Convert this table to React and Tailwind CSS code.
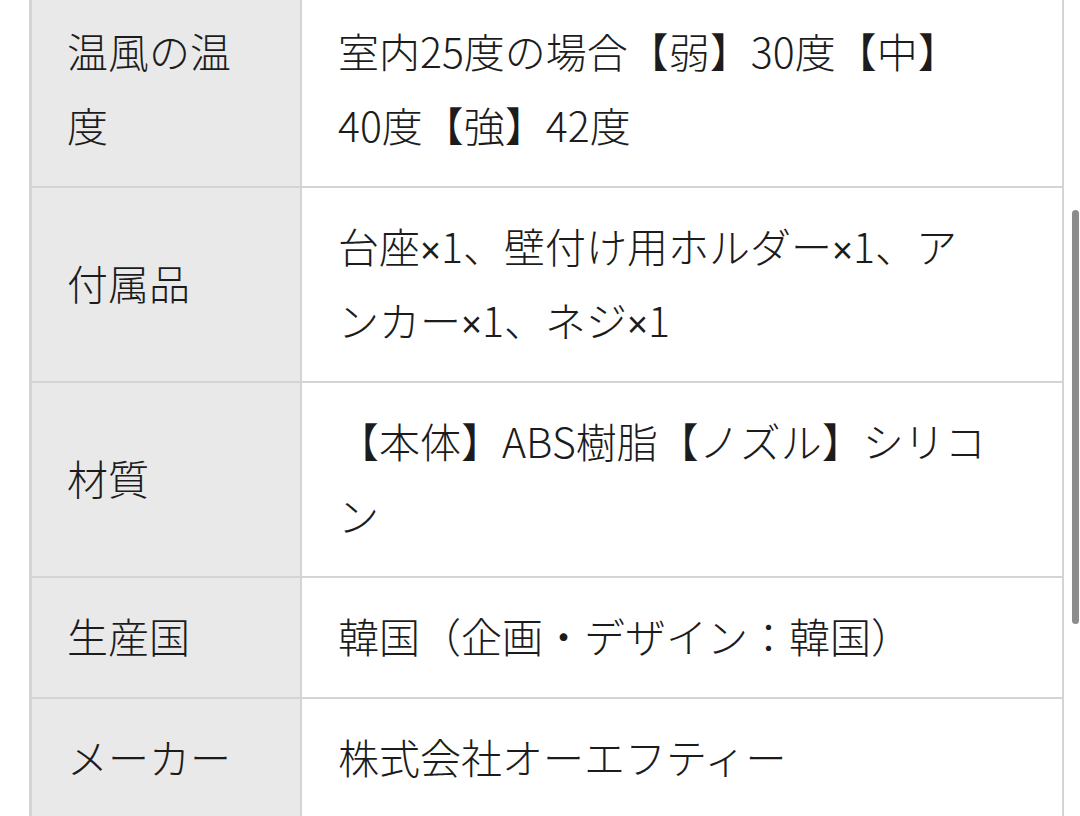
import React from 'react';

const filas = [
  { label: ['温風の温', '度'], value: ['室内25度の場合【弱】30度【中】', '40度【強】42度'] },
  { label: ['付属品'], value: ['台座×1、壁付け用ホルダー×1、ア', 'ンカー×1、ネジ×1'] },
  { label: ['材質'], value: ['【本体】ABS樹脂【ノズル】シリコ', 'ン'] },
  { label: ['生産国'], value: ['韓国（企画・デザイン：韓国）'] },
  { label: ['メーカー'], value: ['株式会社オーエフティー'] },
];

// el "×" de la captura es estrecho, no de ancho completo
const conPor = (txt) =>
  txt.split('×').flatMap((p, k) =>
    k === 0
      ? [p]
      : [
          <span key={k} style={{ fontFamily: '"Liberation Sans", sans-serif' }} className="text-[36px] leading-none">×</span>,
          p,
        ]
  );

const App = () => {
  return (
    <div
      className="relative w-[1080px] h-[816px] overflow-hidden bg-white text-[#1c1c1c]"
      style={{ fontFamily: '"Noto Sans CJK JP", "Noto Sans", sans-serif' }}
    >
      <div className="pl-[29px] -mt-[7px]">
        <div className="w-[1035px] border-l-[3px] border-r-[2px] border-[#d4d4d4]">
          {filas.map((f, i) => (
            <div key={i} className="flex border-b-[2px] border-[#d4d4d4]">
              <div className="w-[268px] shrink-0 bg-[#e9e9e9] flex flex-col justify-center pl-[35px] pr-[20px] pt-[20px] pb-[25px] text-[41px] leading-[74px] font-light">
                {f.label.map((l, j) => (
                  <div key={j} className="whitespace-nowrap h-[74px]">{l}</div>
                ))}
              </div>
              <div className="flex-1 border-l-[2px] border-[#d4d4d4] pl-[36px] pr-[20px] pt-[20px] pb-[25px] text-[41px] leading-[74px] font-light">
                {f.value.map((v, j) => (
                  <div key={j} className="whitespace-nowrap h-[74px]">{conPor(v)}</div>
                ))}
              </div>
            </div>
          ))}
        </div>
      </div>

      {/* barra de scroll */}
      <div className="absolute right-[1px] top-[210px] w-[7px] h-[414px] rounded-full bg-[#8c8c8c]" />
    </div>
  );
};

export default App;
